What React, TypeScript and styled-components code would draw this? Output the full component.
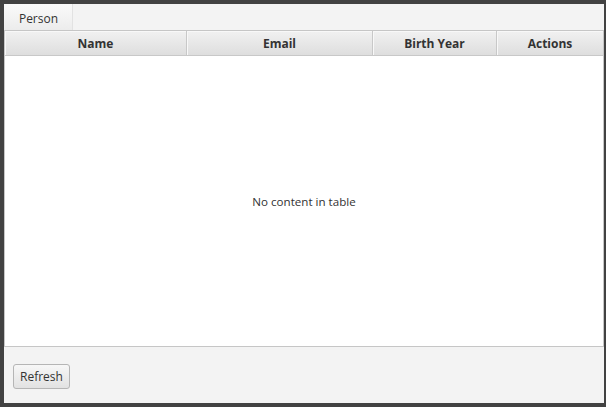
import React from "react";
import styled, { createGlobalStyle } from "styled-components";

const Global = createGlobalStyle`
  html, body { margin: 0; padding: 0; background: #3f3f3f; }
  body { font-family: "Segoe UI", "Open Sans", sans-serif; }
`;

const Frame = styled.div`
  width: 606px;
  height: 407px;
  box-sizing: border-box;
  padding: 4px 2px 4px 4px;
  background: #424242;
  display: flex;
`;

const Window = styled.div`
  flex: 1;
  background: #f3f3f3;
  display: flex;
  flex-direction: column;
  min-width: 0;
`;

const TabBar = styled.div`
  display: flex;
  height: 26px;
  align-items: flex-end;
`;

const Tab = styled.div`
  width: 69px;
  height: 26px;
  box-sizing: border-box;
  background: linear-gradient(#fafafa, #ececec);
  border-right: 1px solid #e2e2e2;
  color: #333;
  font-size: 12px;
  display: flex;
  align-items: center;
  justify-content: center;
  padding-top: 2px;
  padding-left: 1px;
`;

const Table = styled.div`
  height: 317px;
  box-sizing: border-box;
  border: 1px solid #c6c6c6;
  display: flex;
  flex-direction: column;
  background: #fff;
`;

const HeaderRow = styled.div`
  display: grid;
  grid-template-columns: 182px 186px 124px 1fr;
  height: 24px;
  background: linear-gradient(#f1f1f1, #dedede);
  border-bottom: 1px solid #c8c8c8;
`;

const HeaderCell = styled.div<{ $last?: boolean }>`
  display: flex;
  align-items: center;
  justify-content: center;
  font-weight: bold;
  font-size: 12px;
  color: #333;
  padding-top: 1px;
  border-right: ${(p) => (p.$last ? "none" : "1px solid #c8c8c8")};
  box-shadow: inset 1px 1px 0 #f8f8f8;
`;

const Body = styled.div`
  flex: 1;
  display: flex;
  align-items: center;
  justify-content: center;
  font-size: 11.6px;
  color: #333;
  padding-top: 1px;
`;

const Footer = styled.div`
  flex: 1;
  display: flex;
  align-items: center;
  padding-left: 9px;
  padding-top: 2px;
`;

const Button = styled.button`
  height: 25px;
  padding: 0 6px;
  border: 1px solid #b5b5b5;
  border-radius: 3px;
  background: linear-gradient(#f7f7f7, #e2e2e2);
  font-family: inherit;
  font-size: 12px;
  color: #333;
`;

export default function App() {
  return (
    <>
      <Global />
      <Frame>
        <Window>
          <TabBar>
            <Tab>Person</Tab>
          </TabBar>
          <Table>
            <HeaderRow>
              <HeaderCell>Name</HeaderCell>
              <HeaderCell>Email</HeaderCell>
              <HeaderCell>Birth Year</HeaderCell>
              <HeaderCell $last>Actions</HeaderCell>
            </HeaderRow>
            <Body>No content in table</Body>
          </Table>
          <Footer>
            <Button>Refresh</Button>
          </Footer>
        </Window>
      </Frame>
    </>
  );
}
